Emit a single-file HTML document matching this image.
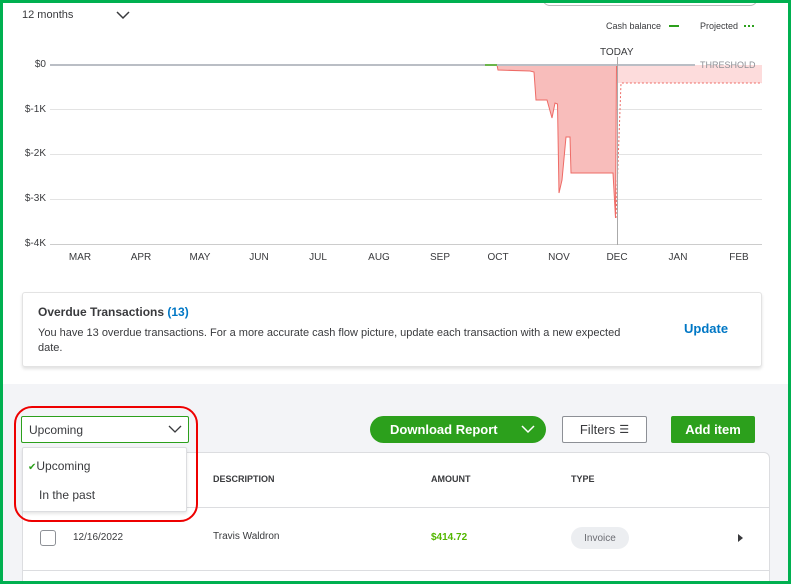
<!DOCTYPE html>
<html><head><style>
*{margin:0;padding:0;box-sizing:border-box}
html,body{width:791px;height:584px;overflow:hidden}
body{font-family:"Liberation Sans",sans-serif;position:relative;background:#fff}
.abs{position:absolute}
.frame{position:absolute;left:0;top:0;width:791px;height:584px;border:3px solid #00b050;z-index:50;pointer-events:none}
.t{position:absolute;font-size:10px;color:#393a3d;white-space:nowrap}
.yl{font-size:10px;color:#393a3d;position:absolute;right:745px;text-align:right}
.ml{position:absolute;top:252px;font-size:10px;color:#393a3d;transform:translateX(-50%)}
.btn{position:absolute;font-weight:bold;font-size:13px;display:flex;align-items:center;justify-content:center}
</style></head><body>
<div class="abs" style="left:0;top:0;width:791px;height:384px;background:#fff"></div>
<div class="abs" style="left:0;top:384px;width:791px;height:200px;background:#f3f4f7"></div>
<div class="abs" style="left:542px;top:-10px;width:216px;height:16px;border:1px solid #bbb;border-radius:8px"></div>
<div class="t" style="left:22px;top:9px;font-size:11px">12 months</div>
<svg class="abs" style="left:116px;top:10px" width="14" height="10"><path d="M1 2 L7 8 L13 2" stroke="#393a3d" stroke-width="1.5" fill="none"/></svg>
<div class="t" style="left:606px;top:21px;font-size:9px">Cash balance</div>
<div class="abs" style="left:669px;top:25px;width:10px;height:2px;background:#2ca01c"></div>
<div class="t" style="left:700px;top:21px;font-size:9px">Projected</div>
<div class="abs" style="left:744px;top:25px;width:10px;border-top:2px dotted #2ca01c"></div>
<div class="t" style="left:600px;top:47px;font-size:10px">TODAY</div>
<div class="yl" style="top:59px">$0</div>
<div class="yl" style="top:104px">$-1K</div>
<div class="yl" style="top:148px">$-2K</div>
<div class="yl" style="top:193px">$-3K</div>
<div class="yl" style="top:238px">$-4K</div>
<svg class="abs" style="left:0;top:0" width="791" height="270">
<g stroke="#e3e3e3" stroke-width="1"><line x1="50" y1="109.5" x2="762" y2="109.5"/><line x1="50" y1="154.5" x2="762" y2="154.5"/><line x1="50" y1="199.5" x2="762" y2="199.5"/></g>
<line x1="50" y1="244.5" x2="762" y2="244.5" stroke="#ccc"/>
<rect x="617" y="65" width="145" height="18" fill="#fddcdc"/>
<path d="M497 65 L498 70 L530 71 L534 72 L536 100 L547 100 L552 118 L555 103 L557.5 104 L559 193 L562 180 L566 137 L570 137 L571 173 L613 173 L615.5 218 L616.5 65 Z" fill="#f8bdbb" stroke="#ee6b66" stroke-width="1"/>
<path d="M616 218 L621 83 L762 83" stroke="#ee6b66" stroke-width="1" stroke-dasharray="2 2" fill="none"/>
<line x1="50" y1="65" x2="695" y2="65" stroke="#babec5" stroke-width="2"/>
<line x1="485" y1="65" x2="497" y2="65" stroke="#6bb64a" stroke-width="2"/>
<line x1="617.5" y1="57" x2="617.5" y2="245" stroke="#aaa" stroke-width="1"/>
<text x="700" y="68" font-size="9" fill="#8d9096" font-family="Liberation Sans">THRESHOLD</text>
</svg>
<div class="ml" style="left:80px">MAR</div><div class="ml" style="left:141px">APR</div><div class="ml" style="left:200px">MAY</div><div class="ml" style="left:259px">JUN</div><div class="ml" style="left:318px">JUL</div><div class="ml" style="left:379px">AUG</div><div class="ml" style="left:440px">SEP</div><div class="ml" style="left:498px">OCT</div><div class="ml" style="left:559px">NOV</div><div class="ml" style="left:617px">DEC</div><div class="ml" style="left:678px">JAN</div><div class="ml" style="left:739px">FEB</div>
<div class="abs" style="left:22px;top:292px;width:740px;height:75px;border:1px solid #e3e3e3;border-radius:3px;box-shadow:0 2px 3px rgba(0,0,0,.12);background:#fff"></div>
<div class="t" style="left:38px;top:305px;font-size:12px;font-weight:bold">Overdue Transactions <span style="color:#0077c5">(13)</span></div>
<div class="t" style="left:38px;top:326px;font-size:11px;line-height:15px;white-space:normal;width:605px">You have 13 overdue transactions. For a more accurate cash flow picture, update each transaction with a new expected date.</div>
<div class="t" style="left:684px;top:321px;font-size:13px;font-weight:bold;color:#0077c5">Update</div>
<div class="abs" style="left:22px;top:452px;width:748px;height:140px;background:#fff;border:1px solid #dcdde0;border-radius:6px"></div>
<div class="abs" style="left:22px;top:507px;width:748px;height:1px;background:#dcdde0"></div>
<div class="abs" style="left:22px;top:570px;width:748px;height:1px;background:#dcdde0"></div>
<div class="t" style="left:213px;top:474px;font-size:9px;font-weight:bold">DESCRIPTION</div>
<div class="t" style="left:431px;top:474px;font-size:9px;font-weight:bold">AMOUNT</div>
<div class="t" style="left:571px;top:474px;font-size:9px;font-weight:bold">TYPE</div>
<div class="abs" style="left:40px;top:530px;width:16px;height:16px;border:1px solid #8d9096;border-radius:3px"></div>
<div class="t" style="left:73px;top:532px;font-size:10px">12/16/2022</div>
<div class="t" style="left:213px;top:531px;font-size:10px">Travis Waldron</div>
<div class="t" style="left:431px;top:532px;font-size:10px;font-weight:bold;color:#53b700">$414.72</div>
<div class="abs" style="left:571px;top:527px;width:58px;height:22px;border-radius:11px;background:#eceef1;font-size:10px;color:#6b6c72;display:flex;align-items:center;justify-content:center">Invoice</div>
<svg class="abs" style="left:737px;top:533px" width="8" height="10"><path d="M1 1 L6 5 L1 9Z" fill="#393a3d"/></svg>
<div class="abs" style="left:21px;top:416px;width:168px;height:27px;border:1px solid #2ca01c;border-radius:2px;background:#fff"></div>
<div class="t" style="left:29px;top:423px;font-size:12px">Upcoming</div>
<svg class="abs" style="left:168px;top:424px" width="14" height="10"><path d="M1 2 L7 8 L13 2" stroke="#393a3d" stroke-width="1.3" fill="none"/></svg>
<div class="abs" style="left:22px;top:447px;width:165px;height:65px;background:#fff;border:1px solid #dcdde0;border-radius:2px;box-shadow:0 2px 3px rgba(0,0,0,.1)"></div>
<div class="t" style="left:28px;top:459px;font-size:12px"><span style="color:#2ca01c;font-size:10px">✔</span>Upcoming</div>
<div class="t" style="left:39px;top:488px;font-size:12px">In the past</div>
<div class="abs" style="left:14px;top:406px;width:184px;height:116px;border:2px solid #e00;border-radius:18px"></div>
<div class="btn" style="left:370px;top:416px;width:176px;height:27px;background:#2ca01c;color:#fff;border-radius:14px;justify-content:flex-start;padding-left:20px">Download Report</div>
<svg class="abs" style="left:521px;top:424px" width="14" height="10"><path d="M1 2 L7 8 L13 2" stroke="#fff" stroke-width="1.5" fill="none"/></svg>
<div class="btn" style="left:562px;top:416px;width:85px;height:27px;border:1px solid #8d9096;border-radius:2px;background:#fff;color:#393a3d;font-weight:normal;font-size:13px">Filters <span style="font-size:11px;margin-left:4px">☰</span></div>
<div class="btn" style="left:671px;top:416px;width:84px;height:27px;background:#2ca01c;color:#fff;border-radius:2px">Add item</div>
<div class="frame"></div>
</body></html>
